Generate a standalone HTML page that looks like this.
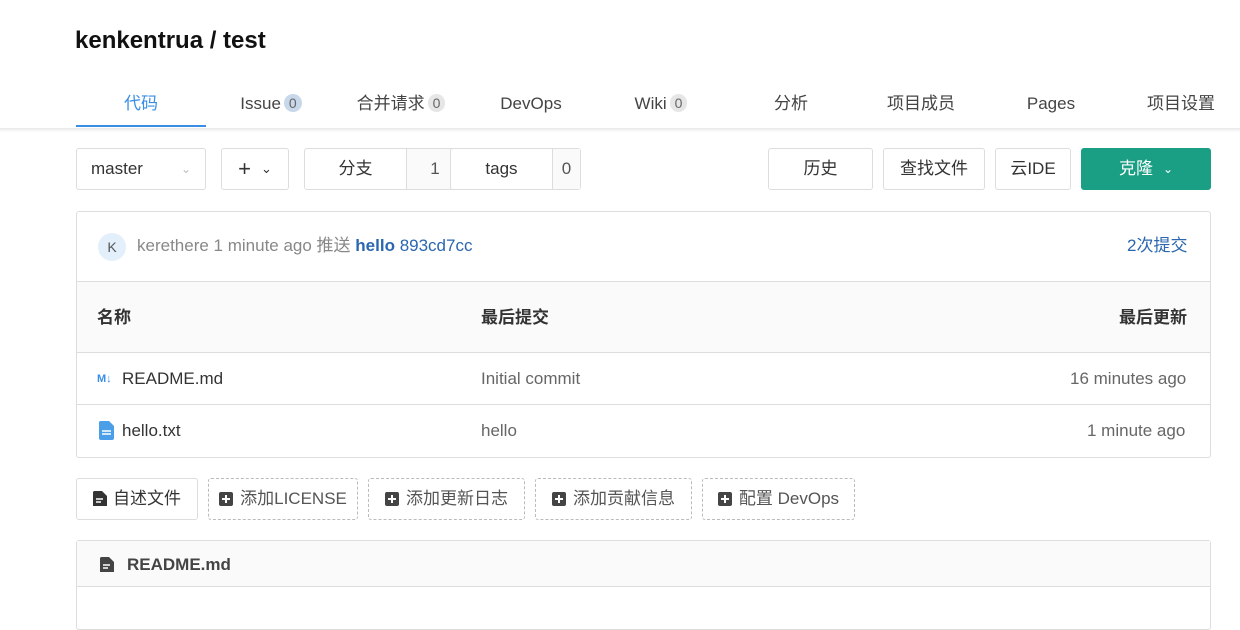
<!DOCTYPE html><html><head><meta charset="utf-8"><style>
*{box-sizing:border-box;margin:0;padding:0}
body{width:1240px;height:617px;overflow:hidden;background:#fff;font-family:"Liberation Sans","Noto Sans CJK SC",sans-serif;font-size:17px;line-height:22px;color:#333;position:relative}
.a{position:absolute;line-height:22px}
.tab{position:absolute;top:93px;width:130px;text-align:center;color:#444;font-size:17px;line-height:22px;white-space:nowrap}
.badge{display:inline-block;background:#e6e6e6;color:#666;border-radius:10px;font-size:14px;line-height:18px;padding:0 5px;margin-left:3px;vertical-align:1px}
.btn{position:absolute;top:148px;height:42px;border:1px solid #ddd;border-radius:3px;background:#fff;display:flex;align-items:center;justify-content:center;color:#333;line-height:22px}
.row{position:absolute;left:76px;width:1135px;border-top:1px solid #ddd}
.dash{position:absolute;top:478px;height:42px;border:1px dashed #bbb;border-radius:3px;display:flex;align-items:center;justify-content:center;color:#555;gap:7px;line-height:22px}
.pl{width:14px;height:14px;background:#444;border-radius:2px;position:relative}
.pl:before{content:"";position:absolute;left:3px;top:6px;width:8px;height:2px;background:#fff}
.pl:after{content:"";position:absolute;left:6px;top:3px;width:2px;height:8px;background:#fff}
</style></head><body>
<div class="a" style="left:75px;top:28px;font-size:24px;line-height:26px;font-weight:bold;color:#111">kenkentrua / test</div>
<div class="a" style="left:0;top:128px;width:1240px;height:4px;background:linear-gradient(#e8e8e8,#fff)"></div>
<div class="tab" style="left:76px;color:#3a8ee6">代码</div>
<div class="a" style="left:76px;top:125px;width:130px;height:2px;background:#3a8ee6"></div>
<div class="tab" style="left:206px">Issue<span class="badge" style="background:#c8d8ea">0</span></div>
<div class="tab" style="left:336px">合并请求<span class="badge">0</span></div>
<div class="tab" style="left:466px">DevOps</div>
<div class="tab" style="left:596px">Wiki<span class="badge">0</span></div>
<div class="tab" style="left:726px">分析</div>
<div class="tab" style="left:856px">项目成员</div>
<div class="tab" style="left:986px">Pages</div>
<div class="tab" style="left:1116px">项目设置</div>

<div class="btn" style="left:76px;width:130px;justify-content:space-between;padding:0 14px"><span>master</span><span style="color:#bbb;font-size:12px">⌄</span></div>
<div class="btn" style="left:221px;width:68px;font-size:22px">+<span style="font-size:13px;margin-left:10px">⌄</span></div>
<div class="btn" style="left:304px;width:160px;justify-content:flex-start"><span style="width:101px;text-align:center">分支</span><span style="border-left:1px solid #ddd;height:40px;line-height:40px;width:57px;text-align:center;color:#555;background:#fafafa">1</span></div>
<div class="btn" style="left:450px;width:131px;justify-content:flex-start"><span style="width:101px;text-align:center">tags</span><span style="border-left:1px solid #ddd;height:40px;line-height:40px;width:28px;text-align:center;color:#555;background:#fafafa">0</span></div>
<div class="btn" style="left:768px;width:105px">历史</div>
<div class="btn" style="left:883px;width:102px">查找文件</div>
<div class="btn" style="left:995px;width:76px">云IDE</div>
<div class="btn" style="left:1081px;width:130px;background:#1a9e84;border-color:#1a9e84;color:#fff">克隆 <span style="font-size:12px;margin-left:10px">⌄</span></div>

<div class="a" style="left:76px;top:211px;width:1135px;height:247px;border:1px solid #ddd;border-radius:3px"></div>
<div class="a" style="left:98px;top:233px;width:28px;height:28px;border-radius:50%;background:#e3effb;text-align:center;line-height:28px;font-size:14px;color:#555">K</div>
<div class="a" style="left:137px;top:235px;color:#888">kerethere 1 minute ago 推送 <b style="color:#2b66b0">hello</b> <span style="color:#2b66b0">893cd7cc</span></div>
<div class="a" style="left:1127px;top:235px;color:#2b66b0">2次提交</div>
<div class="row" style="top:281px;height:72px;background:#fafafa;border-left:1px solid #ddd;border-right:1px solid #ddd"></div>
<div class="a" style="left:97px;top:307px;font-weight:bold">名称</div>
<div class="a" style="left:481px;top:307px;font-weight:bold">最后提交</div>
<div class="a" style="left:1119px;top:307px;font-weight:bold">最后更新</div>
<div class="row" style="top:352px"></div>
<div class="a" style="left:97px;top:368px;font-size:11px;font-weight:bold;color:#3a8ee6">M↓</div>
<div class="a" style="left:122px;top:368px">README.md</div>
<div class="a" style="left:481px;top:368px;color:#666">Initial commit</div>
<div class="a" style="left:1070px;top:368px;color:#666">16 minutes ago</div>
<div class="row" style="top:404px"></div>
<svg class="a" style="left:99px;top:421px" width="15" height="19" viewBox="0 0 15 19"><path d="M1 0h9l5 5v12a2 2 0 0 1-2 2H2a2 2 0 0 1-2-2V1z" fill="#4a9fe8"/><path d="M3 10h9M3 13h9" stroke="#fff" stroke-width="1.5"/></svg>
<div class="a" style="left:122px;top:420px">hello.txt</div>
<div class="a" style="left:481px;top:420px;color:#666">hello</div>
<div class="a" style="left:1087px;top:420px;color:#666">1 minute ago</div>

<div class="btn" style="left:76px;top:478px;width:122px;gap:6px"><svg width="14" height="16" viewBox="0 0 14 16"><path d="M1 0h8l5 5v10H0V1z" fill="#333"/><path d="M3 8h7M3 11h5" stroke="#fff" stroke-width="1.5"/></svg>自述文件</div>
<div class="dash" style="left:208px;width:150px"><span class="pl"></span>添加LICENSE</div>
<div class="dash" style="left:368px;width:157px"><span class="pl"></span>添加更新日志</div>
<div class="dash" style="left:535px;width:157px"><span class="pl"></span>添加贡献信息</div>
<div class="dash" style="left:702px;width:153px"><span class="pl"></span>配置 DevOps</div>

<div class="a" style="left:76px;top:540px;width:1135px;height:90px;border:1px solid #ddd;border-radius:3px"></div>
<div class="a" style="left:77px;top:541px;width:1133px;height:46px;background:#fafafa;border-bottom:1px solid #ddd"></div>
<svg class="a" style="left:100px;top:557px" width="14" height="16" viewBox="0 0 14 16"><path d="M1 0h8l5 5v10H0V1z" fill="#444"/><path d="M3 8h7M3 11h5" stroke="#fff" stroke-width="1.5"/></svg>
<div class="a" style="left:127px;top:554px;font-weight:bold;color:#444">README.md</div>
</body></html>
